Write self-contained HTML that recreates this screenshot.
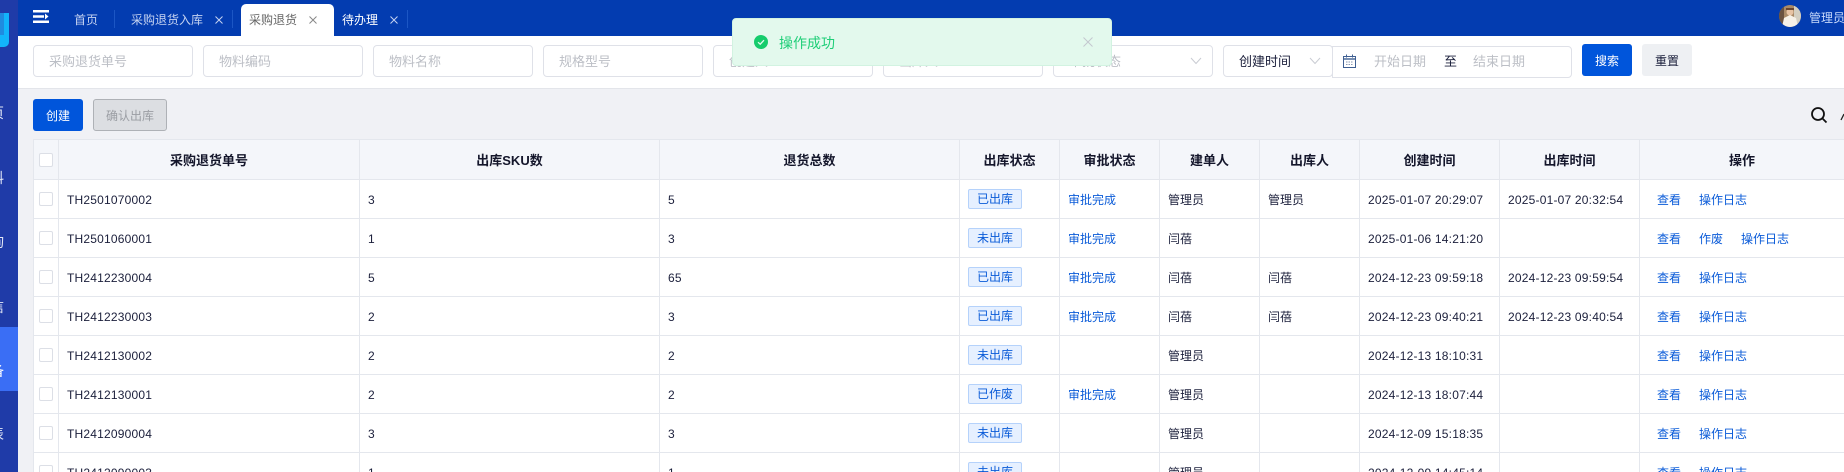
<!DOCTYPE html>
<html lang="zh-CN">
<head>
<meta charset="utf-8">
<title>采购退货</title>
<style>
*{box-sizing:border-box;margin:0;padding:0}
html,body{width:1844px;height:472px;overflow:hidden;background:#f0f1f5}
body{position:relative;font-family:"Liberation Sans","Noto Sans CJK SC",sans-serif;font-size:12px;color:#1b1f3b}
.abs{position:absolute}
#side{left:0;top:0;width:18px;height:472px;background:#1f3ba8;overflow:hidden}
#side .act{position:absolute;left:0;top:327px;width:18px;height:64px;background:#3a6ef5}
#side .c{position:absolute;left:-10px;width:14px;height:16px;line-height:16px;font-size:14px;color:#e4e8f6}
#logo{left:0;top:13px;width:9px;height:34px;background:#12b4fb;border-radius:0 0 5px 0}
#logo i{position:absolute;left:0;top:0;width:4px;height:22px;background:#1f8be0}
#top{left:18px;top:0;width:1826px;height:36px;background:#033cb0}
.tab{position:absolute;top:12px;height:16px;line-height:16px;color:#c6d3f1;white-space:nowrap}
.div{position:absolute;top:10px;width:1px;height:18px;background:#1c56c4}
#acttab{left:241px;top:4px;width:93px;height:32px;background:#fff;border-radius:5px 5px 0 0}
#filter{left:18px;top:36px;width:1826px;height:53px;background:#fff;border-bottom:1px solid #e3e5ea}
.in{position:absolute;top:45px;height:32px;width:160px;border:1px solid #dfe1e8;border-radius:4px;background:#fff;padding-left:15px;line-height:32px;font-size:13px;color:#bcbfc6;white-space:nowrap;overflow:hidden}
.btn{position:absolute;height:32px;line-height:34px;text-align:center;border-radius:3px;font-size:12px}
table{position:absolute;left:33px;top:139px;border-collapse:separate;border-spacing:0;table-layout:fixed;width:1811px;border-left:1px solid #e4e7ed;border-top:1px solid #e4e7ed;background:#fff}
th,td{height:39px;border-right:1px solid #e4e7ed;border-bottom:1px solid #e4e7ed;padding:0 0 0 8px;white-space:nowrap;overflow:hidden;font-size:12px;font-weight:400;text-align:left}
th{height:40px;background:#f4f6fa;font-weight:700;font-size:13px;text-align:center;padding:0;color:#14162b}
td.n{letter-spacing:.2px;padding-top:1px}
td.ck,th.ck{padding:0 0 0 5px;text-align:left}
.box{display:block;width:14px;height:14px;border:1px solid #dcdfe6;border-radius:2px;background:#fff}
.tag{display:inline-block;width:54px;height:20px;line-height:18px;text-align:center;border:1px solid #b5d2fb;border-radius:2px;background:#e6f0ff;color:#0a5bd8}
.l{color:#0a5bd8}
td a{color:#0a5bd8;margin-right:18px;text-decoration:none}
#toast{left:732px;top:18px;width:380px;height:48px;background:#e3f9ed;border:1px solid #d2f3e1;border-radius:4px}
</style>
</head>
<body>
<div class="abs" id="top"></div>

<div class="abs" id="filter"></div>
<div class="in" style="left:33px">采购退货单号</div>
<div class="in" style="left:203px">物料编码</div>
<div class="in" style="left:373px">物料名称</div>
<div class="in" style="left:543px">规格型号</div>
<div class="in" style="left:713px">创建人</div>
<div class="in" style="left:883px">出库人</div>
<div class="in" style="left:1053px">审批状态</div>
<svg class="abs" style="left:1190px;top:57px" width="12" height="8" viewBox="0 0 12 8"><path d="M1 1l5 5.5L11 1" fill="none" stroke="#c9ccd3" stroke-width="1"/></svg>

<div class="in" style="left:1223px;width:110px;color:#1b1f3b;z-index:2">创建时间</div>
<svg class="abs" style="left:1309px;top:57px;z-index:3" width="12" height="8" viewBox="0 0 12 8"><path d="M1 1l5 5.5L11 1" fill="none" stroke="#c9ccd3" stroke-width="1"/></svg>
<div class="in" style="left:1332px;top:46px;width:240px;border-radius:0 4px 4px 0"></div>
<svg class="abs" style="left:1343px;top:54px" width="13" height="14" viewBox="0 0 13 14"><rect x=".5" y="2.5" width="12" height="11" fill="none" stroke="#3f5f92" stroke-width="1"/><path d="M0 5h13" stroke="#3f5f92" stroke-width="1.4"/><path d="M3.5 .5v3M9.500 .5v3" stroke="#3f5f92"/><path d="M3 8h7M3 10.500h7" stroke="#8a98b2" stroke-dasharray="1.500 1"/></svg>
<div class="abs" style="left:1374px;top:54px;line-height:16px;font-size:13px;color:#bcbfc6">开始日期</div>
<div class="abs" style="left:1444px;top:54px;line-height:16px;font-size:13px;color:#1b1f3b">至</div>
<div class="abs" style="left:1473px;top:54px;line-height:16px;font-size:13px;color:#bcbfc6">结束日期</div>
<div class="btn" style="left:1582px;top:44px;width:50px;background:#0055db;color:#fff">搜索</div>
<div class="btn" style="left:1642px;top:44px;width:50px;background:#eef0f3;color:#1b1f3b">重置</div>

<div class="btn" style="left:33px;top:99px;width:50px;background:#0055db;color:#fff">创建</div>
<div class="btn" style="left:93px;top:99px;width:74px;background:#dcdee2;border:1px solid #aeb1b6;color:#9a9da3;line-height:32px">确认出库</div>
<svg class="abs" style="left:1810px;top:106px" width="18" height="18" viewBox="0 0 18 18"><circle cx="8" cy="8" r="6" fill="none" stroke="#111" stroke-width="1.800"/><path d="M12.500 12.500l4 4" stroke="#111" stroke-width="1.800"/></svg>
<svg class="abs" style="left:1840px;top:112px" width="4" height="10" viewBox="0 0 4 10"><path d="M1 8L4 2" stroke="#222" stroke-width="1.300" fill="none"/></svg>

<table>
<colgroup><col style="width:25px"><col style="width:301px"><col style="width:300px"><col style="width:300px"><col style="width:100px"><col style="width:100px"><col style="width:100px"><col style="width:100px"><col style="width:140px"><col style="width:140px"><col style="width:205px"></colgroup>
<tr><th class="ck"><span class="box"></span></th><th>采购退货单号</th><th>出库SKU数</th><th>退货总数</th><th>出库状态</th><th>审批状态</th><th>建单人</th><th>出库人</th><th>创建时间</th><th>出库时间</th><th>操作</th></tr>
<tr><td class="ck"><span class="box"></span></td><td class="n">TH2501070002</td><td class="n">3</td><td class="n">5</td><td><span class="tag">已出库</span></td><td class="l">审批完成</td><td>管理员</td><td>管理员</td><td class="n">2025-01-07 20:29:07</td><td class="n">2025-01-07 20:32:54</td><td style="padding-left:17px"><a>查看</a><a>操作日志</a></td></tr>
<tr><td class="ck"><span class="box"></span></td><td class="n">TH2501060001</td><td class="n">1</td><td class="n">3</td><td><span class="tag">未出库</span></td><td class="l">审批完成</td><td>闫蓓</td><td></td><td class="n">2025-01-06 14:21:20</td><td></td><td style="padding-left:17px"><a>查看</a><a>作废</a><a>操作日志</a></td></tr>
<tr><td class="ck"><span class="box"></span></td><td class="n">TH2412230004</td><td class="n">5</td><td class="n">65</td><td><span class="tag">已出库</span></td><td class="l">审批完成</td><td>闫蓓</td><td>闫蓓</td><td class="n">2024-12-23 09:59:18</td><td class="n">2024-12-23 09:59:54</td><td style="padding-left:17px"><a>查看</a><a>操作日志</a></td></tr>
<tr><td class="ck"><span class="box"></span></td><td class="n">TH2412230003</td><td class="n">2</td><td class="n">3</td><td><span class="tag">已出库</span></td><td class="l">审批完成</td><td>闫蓓</td><td>闫蓓</td><td class="n">2024-12-23 09:40:21</td><td class="n">2024-12-23 09:40:54</td><td style="padding-left:17px"><a>查看</a><a>操作日志</a></td></tr>
<tr><td class="ck"><span class="box"></span></td><td class="n">TH2412130002</td><td class="n">2</td><td class="n">2</td><td><span class="tag">未出库</span></td><td></td><td>管理员</td><td></td><td class="n">2024-12-13 18:10:31</td><td></td><td style="padding-left:17px"><a>查看</a><a>操作日志</a></td></tr>
<tr><td class="ck"><span class="box"></span></td><td class="n">TH2412130001</td><td class="n">2</td><td class="n">2</td><td><span class="tag">已作废</span></td><td class="l">审批完成</td><td>管理员</td><td></td><td class="n">2024-12-13 18:07:44</td><td></td><td style="padding-left:17px"><a>查看</a><a>操作日志</a></td></tr>
<tr><td class="ck"><span class="box"></span></td><td class="n">TH2412090004</td><td class="n">3</td><td class="n">3</td><td><span class="tag">未出库</span></td><td></td><td>管理员</td><td></td><td class="n">2024-12-09 15:18:35</td><td></td><td style="padding-left:17px"><a>查看</a><a>操作日志</a></td></tr>
<tr><td class="ck"><span class="box"></span></td><td class="n">TH2412090003</td><td class="n">1</td><td class="n">1</td><td><span class="tag">未出库</span></td><td></td><td>管理员</td><td></td><td class="n">2024-12-09 14:45:14</td><td></td><td style="padding-left:17px"><a>查看</a><a>操作日志</a></td></tr>
</table>

<div class="abs" id="side">
  <div class="act"></div>
  <div class="abs" id="logo"><i></i></div>
  <div class="c" style="top:105px">页</div>
  <div class="c" style="top:170px">料</div>
  <div class="c" style="top:234px">询</div>
  <div class="c" style="top:299px">信</div>
  <div class="c" style="top:363px;color:#fff">备</div>
  <div class="c" style="top:426px">表</div>
</div>

<svg class="abs" style="left:33px;top:10px" width="16" height="13" viewBox="0 0 16 13"><path d="M0 0h16v2.500H0zM0 10.500h16V13H0zM0 5.300h11v2.400H0z" fill="#fff"/><path d="M12 3.500L15.500 6.500 12 9.500z" fill="#fff"/></svg>
<div class="tab" style="left:74px">首页</div>
<div class="div" style="left:114px"></div>
<div class="tab" style="left:131px">采购退货入库</div>
<svg class="abs" style="left:215px;top:16px" width="8" height="8" viewBox="0 0 8 8"><path d="M.5 .5l7 7M7.500 .5l-7 7" stroke="#c6d3f1" stroke-width="1"/></svg>
<div class="div" style="left:232px"></div>
<div class="abs" id="acttab"></div>
<div class="tab" style="left:249px;color:#666">采购退货</div>
<svg class="abs" style="left:309px;top:16px" width="8" height="8" viewBox="0 0 8 8"><path d="M.5 .5l7 7M7.500 .5l-7 7" stroke="#888" stroke-width="1"/></svg>
<div class="tab" style="left:342px;color:#fff">待办理</div>
<svg class="abs" style="left:390px;top:16px" width="8" height="8" viewBox="0 0 8 8"><path d="M.5 .5l7 7M7.500 .5l-7 7" stroke="#c6d3f1" stroke-width="1"/></svg>
<div class="div" style="left:407px"></div>

<svg class="abs" style="left:1779px;top:5px" width="22" height="22" viewBox="0 0 22 22"><defs><clipPath id="av"><circle cx="11" cy="11" r="11"/></clipPath></defs><g clip-path="url(#av)"><rect width="22" height="22" fill="#a98a68"/><rect x="15" width="7" height="22" fill="#d4cfc2"/><rect width="5" height="22" fill="#6a5240"/><circle cx="11" cy="7" r="3.500" fill="#e7c3a4"/><path d="M7 3h8v2H7z" fill="#6a4630"/><path d="M3 22l2-9 6-3 6 3 2 9z" fill="#f6f1e8"/></g></svg>
<div class="tab" style="left:1809px;top:10px;color:#c6d8fa">管理员</div>

<div class="abs" id="toast"></div>
<svg class="abs" style="left:754px;top:35px" width="14" height="14" viewBox="0 0 14 14"><circle cx="7" cy="7" r="7" fill="#16cc6c"/><path d="M4 7.200l2.200 2 3.800-4" fill="none" stroke="#e3f9ed" stroke-width="1.300"/></svg>
<div class="abs" style="left:779px;top:34px;line-height:18px;font-size:14px;color:#1fce78">操作成功</div>
<svg class="abs" style="left:1083px;top:37px" width="10" height="10" viewBox="0 0 10 10"><path d="M.5 .5l9 9M9.500 .5l-9 9" stroke="#c4c8cf" stroke-width="1"/></svg>
</body>
</html>
